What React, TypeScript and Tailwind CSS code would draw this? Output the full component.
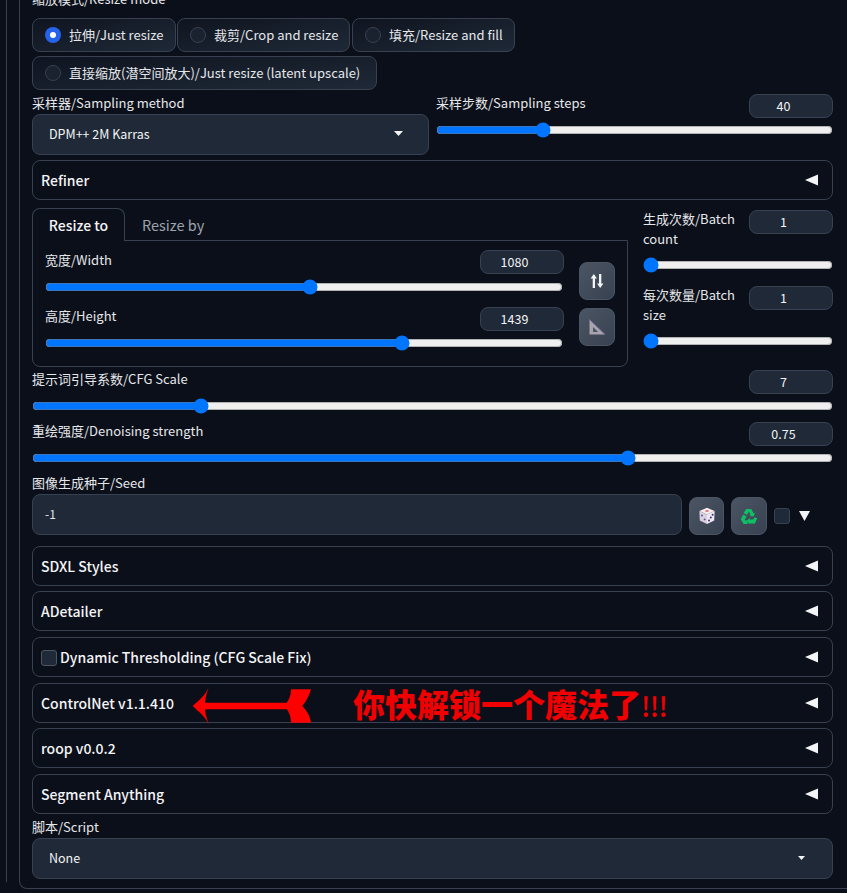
import React from 'react';

const Slider: React.FC<{ value: number; className?: string }> = ({ value, className }) => (
  <input type="range" min={0} max={100} step={0.01} defaultValue={value} className={`block h-4 w-full ${className || ''}`} />
);

const NumberBox: React.FC<{ value: string; className?: string }> = ({ value, className }) => (
  <div className={`flex h-6 w-[84px] shrink-0 items-center justify-center rounded-lg border border-[#374151] bg-[#1f2937] pb-px pr-[15px] text-[12.5px] text-[#f3f4f6] ${className || ''}`}>
    {value}
  </div>
);

const Radio: React.FC<{ label: string; checked?: boolean; className?: string }> = ({ label, checked, className }) => (
  <div className={`flex h-[34px] items-center rounded-lg border border-[#374151] bg-gradient-to-br from-[#0f1520] to-[#1f2937] pl-[12px] text-[13px] text-[#e5e7eb] ${className || ''}`}>
    {checked ? (
      <span className="mr-[8px] flex h-4 w-4 items-center justify-center rounded-full bg-[#2563eb]">
        <span className="h-[6px] w-[6px] rounded-full bg-white" />
      </span>
    ) : (
      <span className="mr-[8px] h-4 w-4 rounded-full border border-[#374151] bg-[#1a2230]" />
    )}
    {label}
  </div>
);

const Caret: React.FC = () => (
  <svg width="13" height="12" viewBox="0 0 13 12" className="shrink-0">
    <polygon points="0,6 13,0.5 13,11.5" fill="#f3f4f6" />
  </svg>
);

const Accordion: React.FC<{ label: string; className?: string; check?: boolean }> = ({ label, className, check }) => (
  <div className={`flex h-10 items-center justify-between rounded-lg border border-[#374151] pl-2 pr-[14px] text-[14px] font-medium text-[#f3f4f6] ${className || ''}`}>
    <span className="flex items-center">
      {check && <span className="mr-[3px] mt-[2px] h-4 w-4 rounded-[3px] border border-[#4b5563] bg-[#1f2937]" />}
      {label}
    </span>
    <Caret />
  </div>
);

const SelectBox: React.FC<{ value: string; className?: string; small?: boolean }> = ({ value, className, small }) => (
  <div className={`flex h-[41px] items-center justify-between rounded-lg border border-[#374151] bg-[#1f2937] pb-[2px] pl-4 text-[12.5px] text-[#f3f4f6] ${className || ''}`}>
    {value}
    {small ? (
      <svg width="7" height="4" viewBox="0 0 7 4" className="mr-[27px]">
        <polygon points="0,0 7,0 3.5,4" fill="#f3f4f6" />
      </svg>
    ) : (
      <svg width="9" height="5" viewBox="0 0 9 5" className="mr-[25px]">
        <polygon points="0,0 9,0 4.5,5" fill="#f3f4f6" />
      </svg>
    )}
  </div>
);

const ToolButton: React.FC<{ children: React.ReactNode; className?: string }> = ({ children, className }) => (
  <div className={`flex items-center justify-center rounded-lg border border-[#4b5563] bg-gradient-to-br from-[#4b5563] to-[#374151] ${className || ''}`}>
    {children}
  </div>
);

const SwapIcon = () => (
  <svg width="14" height="16" viewBox="0 0 14 16" fill="#f3f4f6">
    <path d="M3.8 1 7 5.6H5V15H2.7V5.6H.6zM10.2 15 13.4 10.4H11.3V1H9V10.4H7z" />
  </svg>
);

const RulerIcon = () => (
  <svg width="18" height="18" viewBox="0 0 18 18">
    <path d="M1.5 1.5 17 16.5H1.5z" fill="#a8a4ab" />
    <path d="M5 9 10.2 14H5z" fill="#4b5563" />
    <path d="M1.5 1.5 17 16.5" stroke="#7c6aa0" strokeWidth="1" fill="none" />
  </svg>
);

const DiceIcon = () => (
  <svg width="18" height="18" viewBox="0 0 18 18">
    <path d="M9 .8 16.6 4 9 7.4 1.4 4z" fill="#f4eef0" />
    <path d="M1.4 4 9 7.4V17L1.8 13.4z" fill="#d9d0e0" />
    <path d="M16.6 4 9 7.4V17L16.2 13.4z" fill="#efe8f0" />
    <ellipse cx="9" cy="4" rx="1.8" ry="1" fill="#e8737a" />
    <circle cx="4" cy="8.5" r=".9" fill="#5a4a8a" />
    <circle cx="6.6" cy="12.4" r=".9" fill="#5a4a8a" />
    <circle cx="11" cy="13.6" r="1" fill="#3d2f7a" />
    <circle cx="14.6" cy="7.8" r="1" fill="#3d2f7a" />
    <circle cx="12.8" cy="10.6" r="1" fill="#3d2f7a" />
  </svg>
);

const RecycleIcon = () => (
  <svg width="18" height="17" viewBox="0 0 18 17" fill="#0fbf66">
    <path d="M6.2 1h5l2.6 4.4 1.5-.9-1.8 4-4.4-.4 1.5-.9L8.9 3.4 6.9 7 3.6 5z" />
    <path d="M3.2 6.6 6.6 8.6 4.6 12.2H7.6V16H3.6L.8 11.3z" />
    <path d="M17.3 10.6 14.9 16H9.6V17L6.9 13.6 9.6 10.4V12H13.2L14 10.2z" transform="translate(0 -.6)" />
  </svg>
);

const RedArrow = () => (
  <svg width="135" height="50" viewBox="0 0 135 50">
    <path
      d="M7.7 26C14 20 21 15 23.7 6.7C22 13 20 18 20 22.7H101.7C104 20 106 15 106 9.3H126C124 16 121 22 117.3 26C121 30 125 35 126 42.7H106C106 37 104 32 101.7 29.3H20C20 34 22 38 23.7 45C21 37 14 32 7.7 26Z"
      fill="#ff0000"
    />
  </svg>
);

const App: React.FC = () => {
  const font = { fontFamily: '"Noto Sans CJK SC", "Noto Sans", sans-serif' };

  return (
    <div style={font} className="relative h-[893px] w-[847px] overflow-hidden bg-[#0b0f19] pl-[6px] leading-[20px] text-[#e5e7eb]">
      <div className="h-full border-l border-[#374151] pl-[12px]">
        <div className="-mt-[11px] h-[900px] rounded-bl-lg border-b border-l border-[#374151] pb-[10px] pl-[12px]">
          <div className="h-full w-[821px] border-r border-dashed border-[#374151] pr-[7px]">
            <div className="flex w-[801px] flex-col text-[13px]">
              <div className="h-[21px] leading-[20px]">缩放模式/Resize mode</div>

              <div className="mt-[8px] flex gap-[1px]">
                <Radio label="拉伸/Just resize" checked className="w-[144px]" />
                <Radio label="裁剪/Crop and resize" className="w-[173px]" />
                <Radio label="填充/Resize and fill" className="ml-[1px] w-[163px]" />
              </div>
              <Radio label="直接缩放(潜空间放大)/Just resize (latent upscale)" className="mt-[4px] w-[345px]" />

              <div className="mt-[4px] flex gap-[7px]">
                <div className="w-[397px]">
                  <div className="h-5 leading-[18px]">采样器/Sampling method</div>
                  <SelectBox value="DPM++ 2M Karras" className="w-[397px]" />
                </div>
                <div className="w-[397px]">
                  <div className="flex items-start justify-between">
                    <span className="-mt-px">采样步数/Sampling steps</span>
                    <NumberBox value="40" />
                  </div>
                  <Slider value={25.9} className="mt-[4px]" />
                </div>
              </div>

              <Accordion label="Refiner" className="mt-[5px]" />

              <div className="mt-[8px] flex">
                <div className="w-[596px]">
                  <div className="flex h-[33px] items-stretch">
                    <div className="relative z-10 flex h-[33px] w-[93px] items-center justify-center rounded-t-lg border border-b-0 border-[#374151] bg-[#0b0f19] text-[14px] font-medium text-[#f3f4f6]">
                      Resize to
                    </div>
                    <div className="flex items-center pl-[17px] text-[14.5px] text-[#9ca3af]">Resize by</div>
                  </div>
                  <div className="-mt-px flex h-[127px] rounded-b-lg border border-[#374151] pl-3 pt-[9px]">
                    <div className="w-[518px]">
                      <div className="flex items-start justify-between">
                        <span>宽度/Width</span>
                        <NumberBox value="1080" className="mr-[-1px]" />
                      </div>
                      <Slider value={51.2} className="mt-[5px]" />
                      <div className="mt-[12px] flex items-start justify-between">
                        <span className="-mt-px">高度/Height</span>
                        <NumberBox value="1439" className="mr-[-1px]" />
                      </div>
                      <Slider value={69.5} className="mt-[4px]" />
                    </div>
                    <div className="ml-[16px] flex flex-col gap-[8px] pt-[12px]">
                      <ToolButton className="h-[38px] w-9"><SwapIcon /></ToolButton>
                      <ToolButton className="h-[38px] w-9"><RulerIcon /></ToolButton>
                    </div>
                  </div>
                </div>

                <div className="ml-[15px] w-[190px]">
                  <div className="flex justify-between pt-[2px]">
                    <span className="-mt-px w-[100px]">生成次数/Batch count</span>
                    <NumberBox value="1" className="w-[83px]" />
                  </div>
                  <Slider value={0} className="mt-[8px]" />
                  <div className="mt-[13px] flex justify-between">
                    <span className="-mt-px w-[100px]">每次数量/Batch size</span>
                    <NumberBox value="1" className="w-[79px]" />
                  </div>
                  <Slider value={0} className="mt-[8px]" />
                </div>
              </div>

              <div className="mt-[3px] flex items-start justify-between">
                <span className="-mt-px">提示词引导系数/CFG Scale</span>
                <NumberBox value="7" />
              </div>
              <Slider value={20.5} className="mt-[4px]" />
              <div className="mt-[8px] flex items-start justify-between">
                <span className="-mt-px">重绘强度/Denoising strength</span>
                <NumberBox value="0.75" />
              </div>
              <Slider value={74.9} className="mt-[4px]" />

              <div className="mt-[7px] h-[21px]">图像生成种子/Seed</div>
              <div className="flex items-center">
                <div className="flex h-[41px] w-[650px] items-center rounded-lg border border-[#374151] bg-[#1f2937] pb-[2px] pl-3 text-[12px] text-[#e5e7eb]">-1</div>
                <ToolButton className="ml-[7px] mt-[3px] h-[38px] w-[35px]"><DiceIcon /></ToolButton>
                <ToolButton className="ml-[7px] mt-[3px] h-[38px] w-9"><RecycleIcon /></ToolButton>
                <span className="ml-[7px] mt-[3px] h-4 w-4 rounded-[3px] border border-[#374151] bg-[#1f2937]" />
                <svg width="11" height="10" viewBox="0 0 11 10" className="ml-[9px] mt-[3px]">
                  <polygon points="0,0 11,0 5.5,10" fill="#f3f4f6" />
                </svg>
              </div>

              <Accordion label="SDXL Styles" className="mt-[11px]" />
              <Accordion label="ADetailer" className="mt-[5px]" />
              <Accordion label="Dynamic Thresholding (CFG Scale Fix)" check className="mt-[6px]" />
              <Accordion label="ControlNet v1.1.410" className="mt-[6px]" />
              <Accordion label="roop v0.0.2" className="mt-[5px]" />
              <Accordion label="Segment Anything" className="mt-[6px]" />
              <div className="mt-[3px] h-[21px]">脚本/Script</div>
              <SelectBox value="None" className="w-full" small />
            </div>
          </div>
        </div>
      </div>

      <div className="absolute left-[185px] top-[680px]"><RedArrow /></div>
      <div className="absolute left-[353px] top-[681px] flex items-baseline text-[32px] font-black leading-[44px] text-[#f00000]">
        你快解锁一个魔法了
        <span className="text-[27px] font-medium tracking-[-0.5px]">!!!</span>
      </div>
    </div>
  );
};

export default App;
